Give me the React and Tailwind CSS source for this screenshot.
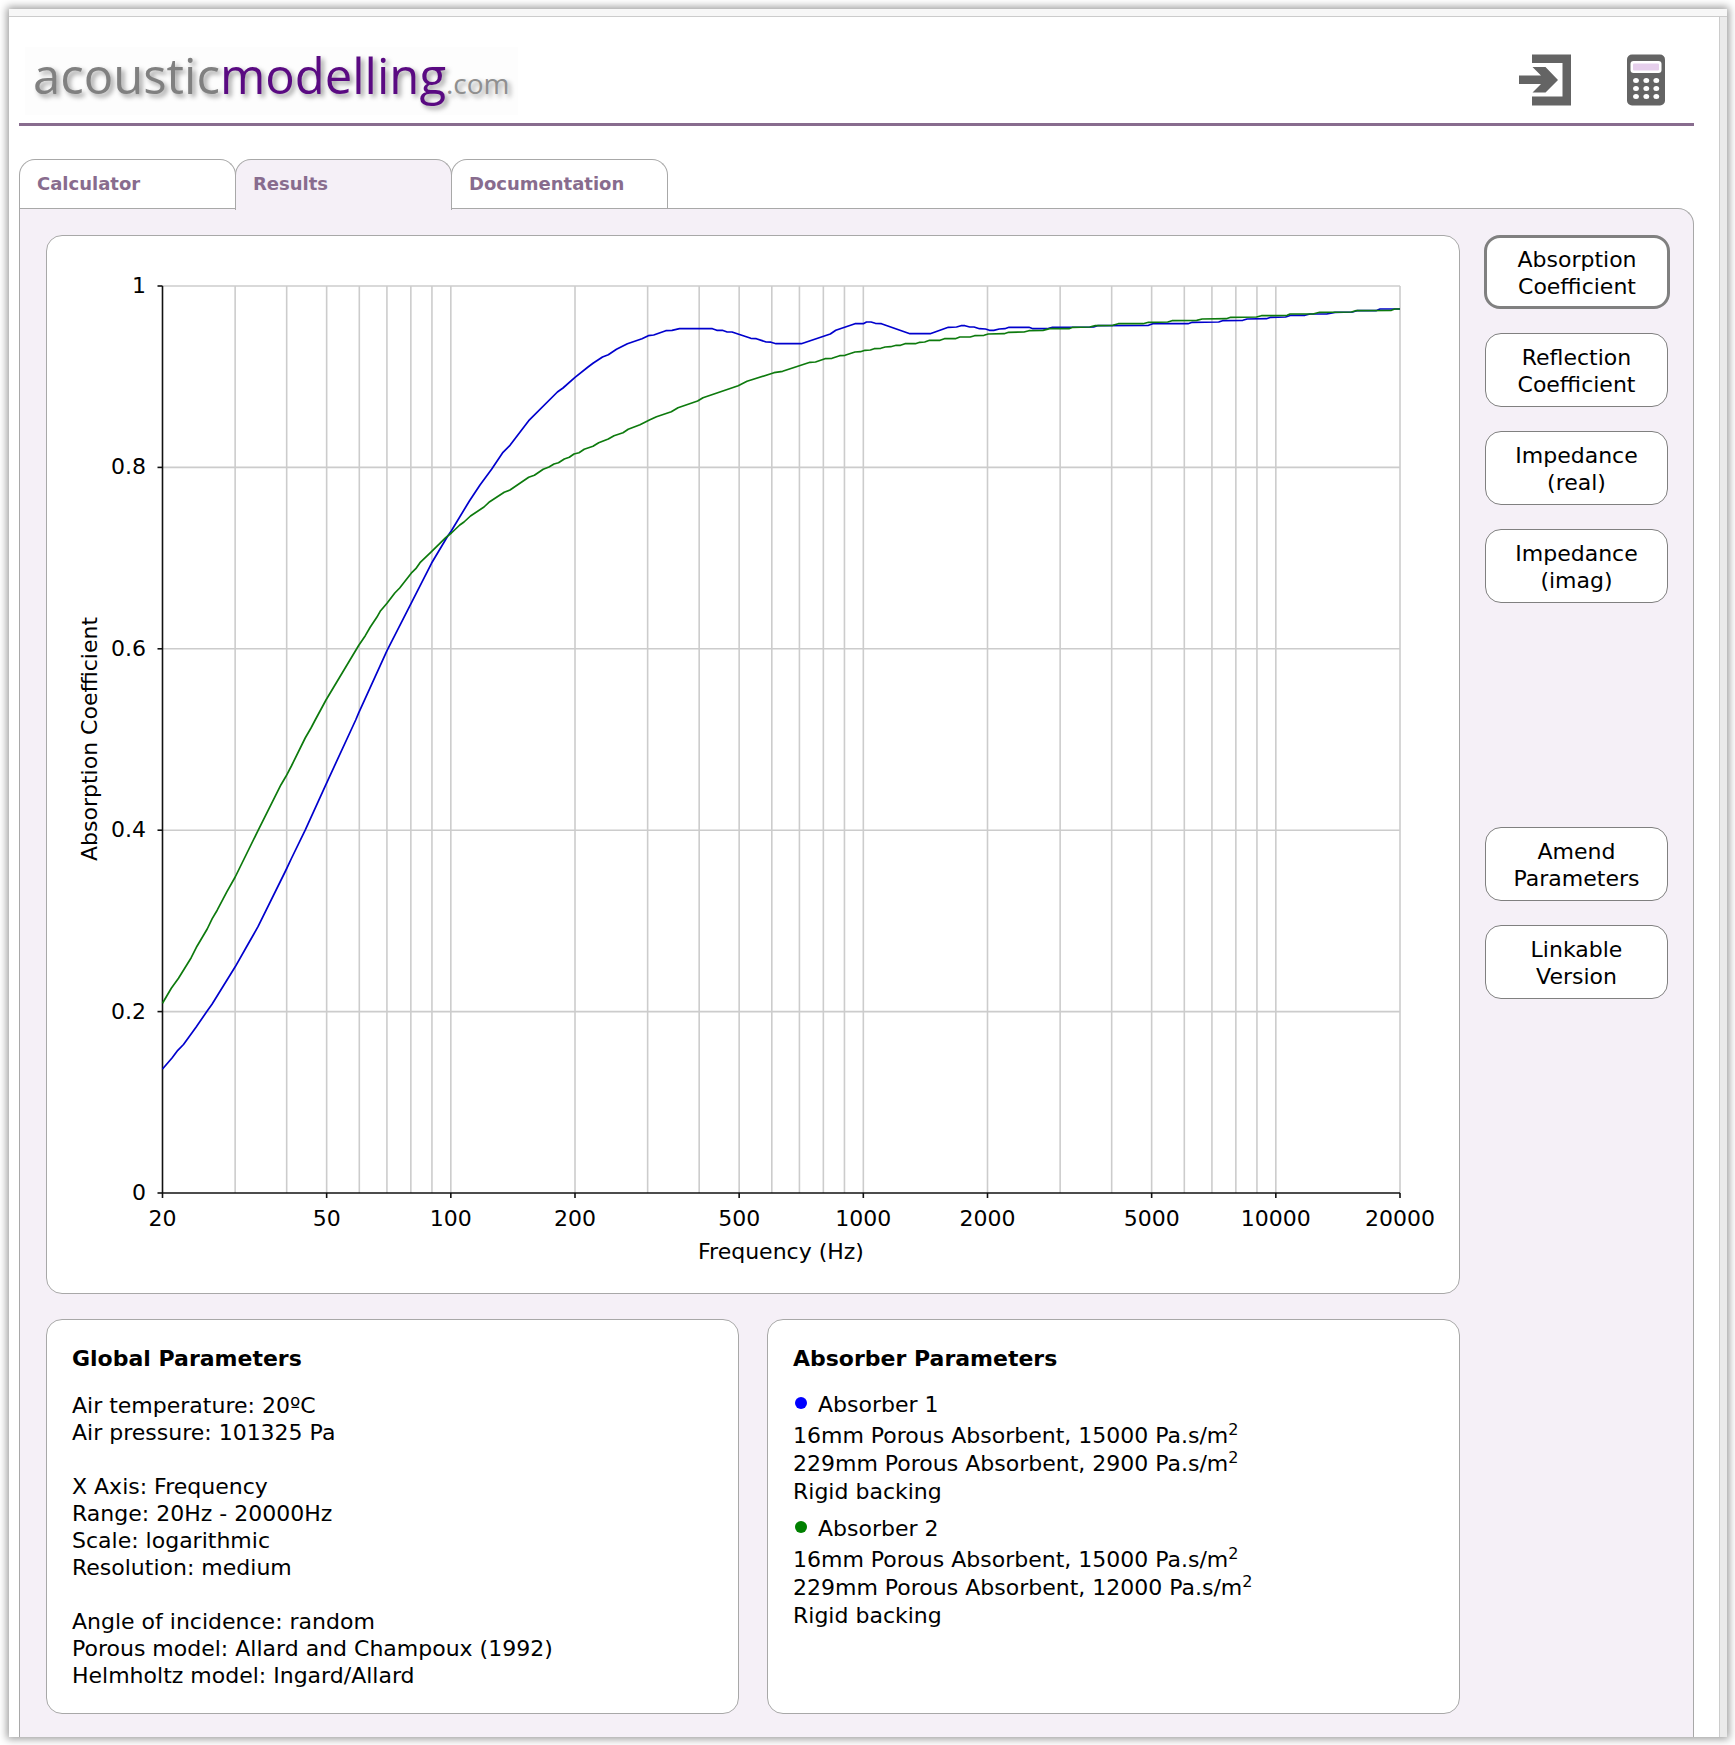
const tabs = [
  { label: "Calculator", href: "#calculator" },
  { label: "Results", href: "#results", active: true },
  { label: "Documentation", href: "#documentation" },
];

const chartButtons = [
  { lines: ["Absorption", "Coefficient"], active: true },
  { lines: ["Reflection", "Coefficient"] },
  { lines: ["Impedance", "(real)"] },
  { lines: ["Impedance", "(imag)"] },
];

const actionButtons = [
  { lines: ["Amend", "Parameters"] },
  { lines: ["Linkable", "Version"] },
];

const globalParameters = [
  ["Air temperature: 20ºC", "Air pressure: 101325 Pa"],
  [
    "X Axis: Frequency",
    "Range: 20Hz - 20000Hz",
    "Scale: logarithmic",
    "Resolution: medium",
  ],
  [
    "Angle of incidence: random",
    "Porous model: Allard and Champoux (1992)",
    "Helmholtz model: Ingard/Allard",
  ],
];

const absorbers = [
  {
    name: "Absorber 1",
    dot: "bg-[#0000ff]",
    layers: [
      "16mm Porous Absorbent, 15000 Pa.s/m",
      "229mm Porous Absorbent, 2900 Pa.s/m",
    ],
  },
  {
    name: "Absorber 2",
    dot: "bg-[#008000]",
    layers: [
      "16mm Porous Absorbent, 15000 Pa.s/m",
      "229mm Porous Absorbent, 12000 Pa.s/m",
    ],
  },
];

// Plot area, in viewBox units
const plot = { left: 162.5, right: 1400, top: 286, bottom: 1193 };

const gridFrequencies = [
  30, 40, 50, 60, 70, 80, 90, 100, 200, 300, 400, 500, 600, 700, 800, 900, 1000,
  2000, 3000, 4000, 5000, 6000, 7000, 8000, 9000, 10000, 20000,
];
const labelFrequencies = [20, 50, 100, 200, 500, 1000, 2000, 5000, 10000, 20000];
const levels = [0, 0.2, 0.4, 0.6, 0.8, 1];

const xOf = (f) =>
  plot.left + (Math.log10(f / 20) / 3) * (plot.right - plot.left);
const yOf = (v) => plot.bottom - v * (plot.bottom - plot.top);

const blueCurve =
  "162.5,1069 172,1058 177.8,1050.3 183.5,1044.5 196,1027.3 207,1011.2 212,1004.3 235.2,966.8 247,946 258,926.7 286,870 291.4,858.5 305.2,830.2 326,784.3 355.7,720 358.8,712.7 387,650.7 412,601.7 431.5,563.3 447.6,536.3 451.4,530.7 469.4,501 480,485 491.6,469.3 503,452.3 510,445.3 528.7,420.7 557.4,392 563,388 575,377.3 588,367 593,363.3 602.5,357 608.3,354.7 616.5,349.3 627.4,343.7 642,338.7 648.3,335.7 653.7,335 665.8,330.7 672,330.3 679.5,328.7 712.4,328.7 716.8,330.3 722.3,330.3 727.2,332 732,332 750.8,338.3 756.3,338.7 766.2,342 771,342.2 776,343.7 801.3,343.7 830.3,334 835.8,330.3 855,323.7 863.3,323.7 866.5,322 871,322 875.3,323.3 881.4,323.7 909.9,333.7 930.2,333.7 948.3,327.3 956.5,327 961,325.7 965,325.7 969.7,327 974,327 979.5,328.7 985.5,329 989.4,330.3 993.8,330.3 999.3,329 1004.8,328.7 1009,327.3 1029,327.3 1033,328.7 1047,328.7 1052.5,327.3 1093.6,327 1097.5,325.7 1148.5,325.3 1152.8,323.7 1188,323.7 1192.3,322.3 1218.7,322 1222.5,320.7 1242.8,320.3 1247.2,319 1266.4,318.7 1270.8,317.3 1285.6,317 1291,315.3 1305,315.3 1310,314 1326.7,314 1335,312.3 1352.5,312 1357,310.7 1376,310.7 1380,309 1400,309";
const greenCurve =
  "162.5,1003.2 171.3,988.3 178.5,978.3 191.2,957.7 197,946.2 207.2,929 212.2,918.6 217.2,910.2 226.8,891.8 235.2,877 258,830.6 281,784.7 286,776.3 291.4,766 305.2,738 311,728 315.2,720 326,700 358.8,645.3 365.3,635.7 370.3,627 376.8,617.3 380.6,610.7 387,603.3 394.8,593 399.7,588 412,572.3 415.8,568.7 420,562.7 431.5,551.7 445.7,537.7 451.4,533 459.8,525 464,522 470.5,516 484,507 489.7,501.7 504.2,492.3 510,490 528.7,477.3 534.4,475.3 543.2,469.3 549,467 554,464 558.5,462.7 564.3,459 569.3,457.3 574,454 579,452.7 584.2,449.3 593,446.3 598.7,442.7 608.3,439 614,435.7 623,432.7 628.2,429.3 640,424.7 649.4,420 656.5,416.7 671.3,411.7 678,407.7 697.6,401 703,397.7 738.2,385.7 747,381.3 774,372.7 782.6,371.3 810,362.3 815.5,362 825,358.7 832,358.3 839.7,355.7 845,355.3 855,352 860.5,351.7 865,350.3 870.4,350 874.2,348.7 880.8,348.3 885.2,347 890.7,346.7 896.2,345.3 900.5,345.3 905,343.7 915.4,343.7 919.7,342.3 924.7,342 929.6,340.3 940,340.3 944.4,338.7 955.4,338.7 959.8,337 970.2,337 974.6,335.7 984,335.3 988.3,334 1004.2,333.7 1008.6,332.3 1024,332 1028.9,330.7 1043,330.3 1049.7,328.7 1069,328.7 1072.8,327.3 1089.8,327 1095.3,325.7 1112.8,325.3 1118.3,323.7 1143,323.7 1148.5,322.3 1167.7,322 1172,320.7 1196.7,320.3 1202.2,319 1226.3,318.7 1230.7,317.3 1256.5,317 1261.4,315.7 1287.2,315.3 1290,314 1313,314 1319.6,312.3 1351.4,312 1355.8,310.7 1391.4,310.3 1394.7,309 1400,309";

function Logo() {
  return (
    <a
      href="#home"
      className="mb-2 block bg-[#fdfdfd] px-2 pb-3 font-['Open_Sans',sans-serif] text-[49px] leading-[56px] [text-shadow:3px_3px_5px_rgba(0,0,0,0.4)]"
    >
      <span className="text-[#808080]">acoustic</span>
      <span className="font-medium text-[#5a0a82]">modelling</span>
      <span className="text-[28px] leading-none text-[#8f8f8f]">.com</span>
    </a>
  );
}

function LoginIcon() {
  return (
    <svg viewBox="0 0 52 52" className="size-[52px]" fill="#646464" aria-hidden="true">
      <path d="M13 0.5H52V51.5H13V42.5H43.5V9H13Z" />
      <path d="M13.5 13H26.5L39 26L26.5 38.5H13.5L22 30H0V21.5H22Z" />
    </svg>
  );
}

function CalculatorIcon() {
  return (
    <svg viewBox="0 0 38 52" className="h-[52px] w-[38px]" aria-hidden="true">
      <rect x="0" y="0.5" width="38" height="51" rx="5" fill="#646464" />
      <rect x="3.5" y="7" width="31" height="12" rx="3" fill="#fff" />
      <rect x="6" y="9.5" width="26" height="7" rx="1" fill="#e6cfec" />
      {[26.5, 34.5, 42.5].map((y) =>
        [9, 19.3, 29.3].map((x) => (
          <ellipse key={`${x}-${y}`} cx={x} cy={y} rx="2.9" ry="2.5" fill="#fff" />
        ))
      )}
    </svg>
  );
}

function Chart() {
  return (
    <svg
      viewBox="47 236 1412 1057"
      className="block h-auto w-full text-[22px]"
      role="img"
      aria-labelledby="y-title x-title"
    >
      {/* Grid */}
      <g stroke="#cccccc" strokeWidth="1.6">
        {gridFrequencies.map((f) => (
          <line key={f} x1={xOf(f)} x2={xOf(f)} y1={plot.top} y2={plot.bottom} />
        ))}
        {levels.slice(1).map((v) => (
          <line key={v} x1={plot.left} x2={plot.right} y1={yOf(v)} y2={yOf(v)} />
        ))}
      </g>

      {/* Axes */}
      <g stroke="#111111" strokeWidth="1.6">
        <line x1={plot.left} x2={plot.left} y1={plot.top} y2={plot.bottom} />
        <line x1={plot.left} x2={plot.right} y1={plot.bottom} y2={plot.bottom} />
        {levels.map((v) => (
          <line key={v} x1={plot.left - 5} x2={plot.left} y1={yOf(v)} y2={yOf(v)} />
        ))}
        {labelFrequencies.map((f) => (
          <line key={f} x1={xOf(f)} x2={xOf(f)} y1={plot.bottom} y2={plot.bottom + 5} />
        ))}
      </g>

      {/* Curves */}
      <g fill="none" strokeWidth="1.7" strokeLinejoin="round">
        <polyline points={blueCurve} stroke="#0000cd" />
        <polyline points={greenCurve} stroke="#0d7a0d" />
      </g>

      {levels.map((v) => (
        <text key={v} x="146" y={yOf(v) + 7} textAnchor="end">
          {v}
        </text>
      ))}
      {labelFrequencies.map((f) => (
        <text key={f} x={xOf(f)} y="1226" textAnchor="middle">
          {f}
        </text>
      ))}
      <text id="x-title" x="781" y="1259" textAnchor="middle">
        Frequency (Hz)
      </text>
      <text id="y-title" transform="translate(97 739) rotate(-90)" textAnchor="middle">
        Absorption Coefficient
      </text>
    </svg>
  );
}

function SideButton({ lines, active }) {
  return (
    <button
      type="button"
      className={`h-[74px] rounded-2xl border-[#808080] bg-white pt-[2px] leading-[27px] ${
        active ? "border-3" : "mr-[2px] ml-px border"
      }`}
    >
      {lines[0]}
      <br />
      {lines[1]}
    </button>
  );
}

export default function App() {
  return (
    <div className="flex min-h-screen bg-white p-2 pt-[9px] pl-[9px] font-['DejaVu_Sans',sans-serif] text-[22px] leading-[27px] text-black">
      <div className="flex flex-1 flex-col bg-white shadow-[0_0_8px_2px_rgba(0,0,0,0.4)]">
        <div className="h-2 border-b border-[#cccccc] bg-[#f7f7f7]" />
        <div className="flex flex-1">
          <main className="flex flex-1 flex-col pr-[25px] pl-[10px]">
            {/* Header */}
            <header className="flex h-[109px] items-end justify-between border-b-3 border-[#886c8e] pr-[29px] pl-[6px]">
              <Logo />
              <div className="mb-[17px] flex items-center gap-14">
                <a href="#login" aria-label="Log in">
                  <LoginIcon />
                </a>
                <a href="#calculator" aria-label="Calculator">
                  <CalculatorIcon />
                </a>
              </div>
            </header>

            {/* Tabs */}
            <nav className="mt-[33px] flex text-[18px] leading-[48px] font-bold text-[#886c8e]">
              {tabs.map((tab) => (
                <a
                  key={tab.label}
                  href={tab.href}
                  className={`-mr-px w-[217px] rounded-t-2xl border border-b-0 border-[#a8a8a8] pl-[17px] ${
                    tab.active ? "relative z-10 -mb-[2px] bg-[#f5f0f7]" : "bg-white"
                  }`}
                >
                  {tab.label}
                </a>
              ))}
            </nav>

            {/* Results panel */}
            <section className="flex flex-1 gap-6 rounded-tr-2xl border border-b-0 border-[#a8a8a8] bg-[#f5f0f7] pt-[26px] pr-[23px] pb-[23px] pl-[26px]">
              <div className="flex flex-1 flex-col gap-[25px]">
                <div className="rounded-2xl border border-[#a8a8a8] bg-white">
                  <Chart />
                </div>

                <div className="grid grid-cols-2 gap-7">
                  <div className="rounded-2xl border border-[#a8a8a8] bg-white p-[25px] pb-6">
                    <h2 className="mb-5 font-bold">Global Parameters</h2>
                    <div className="flex flex-col gap-[27px]">
                      {globalParameters.map((group, i) => (
                        <div key={i}>
                          {group.map((line) => (
                            <p key={line}>{line}</p>
                          ))}
                        </div>
                      ))}
                    </div>
                  </div>

                  <div className="rounded-2xl border border-[#a8a8a8] bg-white p-[25px] pb-6">
                    <h2 className="mb-[19px] font-bold">Absorber Parameters</h2>
                    <div className="flex flex-col gap-[10px]">
                      {absorbers.map((absorber) => (
                        <div key={absorber.name}>
                          <h3 className="mb-1 flex items-center gap-[11px] pl-[2px]">
                            <span className={`mb-[3px] size-3 rounded-full ${absorber.dot}`} />
                            {absorber.name}
                          </h3>
                          {absorber.layers.map((layer) => (
                            <p key={layer} className="leading-7">
                              {layer}
                              <sup className="text-[16px]">2</sup>
                            </p>
                          ))}
                          <p>Rigid backing</p>
                        </div>
                      ))}
                    </div>
                  </div>
                </div>
              </div>

              <aside className="flex w-[186px] flex-col">
                <div className="flex flex-col gap-6">
                  {chartButtons.map((button) => (
                    <SideButton key={button.lines.join(" ")} {...button} />
                  ))}
                </div>
                <div className="mt-56 flex flex-col gap-6">
                  {actionButtons.map((button) => (
                    <SideButton key={button.lines.join(" ")} {...button} />
                  ))}
                </div>
              </aside>
            </section>
          </main>
          <div className="w-2 border-l border-[#cccccc] bg-[#ebebeb]" />
        </div>
      </div>
    </div>
  );
}
